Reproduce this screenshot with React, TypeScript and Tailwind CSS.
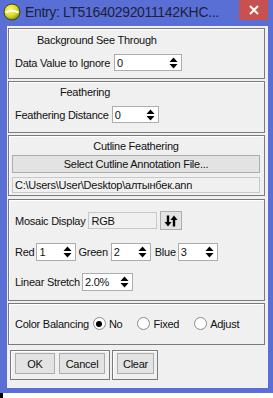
import { ReactNode } from "react";

function Spin() {
  return (
    <svg width="9" height="12" viewBox="0 0 9 12" className="shrink-0">
      <polygon points="4.5,0.5 8.5,5 0.5,5" fill="#000" />
      <polygon points="0.5,7 8.5,7 4.5,11.5" fill="#000" />
    </svg>
  );
}

function SpinBox({ value, w, h = 17 }: { value: string; w: number; h?: number }) {
  return (
    <div
      className="flex items-center justify-between bg-white border border-[#abadb3] pl-[2px] pr-[3px]"
      style={{ width: w, height: h }}
    >
      <span>{value}</span>
      <Spin />
    </div>
  );
}

function Group({ children, className }: { children: ReactNode; className?: string }) {
  return (
    <div className={`border border-[#7a7a7a] shadow-[inset_1px_1px_0_#ffffff] ${className}`}>
      {children}
    </div>
  );
}

function Btn({ children, className }: { children: ReactNode; className?: string }) {
  return (
    <div className={`flex items-center justify-center bg-[#e3e3e3] border border-[#adadad] ${className}`}>
      {children}
    </div>
  );
}

function Radio({ on, label, className }: { on?: boolean; label: string; className?: string }) {
  return (
    <div className={`flex items-center gap-[3px] ${className}`}>
      <div className="w-[13px] h-[13px] rounded-full border border-[#8a8a8a] bg-white flex items-center justify-center">
        {on && <div className="w-[6px] h-[6px] rounded-full bg-black" />}
      </div>
      <span>{label}</span>
    </div>
  );
}

export default function App() {
  return (
    <div
      className="w-[273px] h-[398px] bg-[#5a6fd6] flex flex-col overflow-hidden text-[11px] leading-[14px] tracking-[-0.25px] text-[#111]"
      style={{ fontFamily: '"Liberation Sans", Arial, sans-serif' }}
    >
      {/* title bar */}
      <div className="h-[26px] flex items-start shrink-0">
        <svg width="18" height="18" viewBox="0 0 18 18" className="mt-[3px] ml-[3px]">
          <defs>
            <radialGradient id="g" cx="0.4" cy="0.35" r="0.7">
              <stop offset="0" stopColor="#fff59a" />
              <stop offset="0.6" stopColor="#d8d820" />
              <stop offset="1" stopColor="#6a8a10" />
            </radialGradient>
          </defs>
          <circle cx="9" cy="9" r="8" fill="url(#g)" stroke="#3a4a10" strokeWidth="1" />
          <path d="M2.5 9.5 Q9 6 15.5 9.5" stroke="#fffbe0" strokeWidth="2" fill="none" />
        </svg>
        <span className="ml-[4px] mt-[3px] text-[14px] leading-[18px] tracking-[-0.35px] text-[#1b1f3b]">
          Entry: LT51640292011142KHC...
        </span>
        <div className="ml-auto mr-[5px] w-[29px] h-[20px] bg-[#c75050] flex items-center justify-center">
          <svg width="10" height="10" viewBox="0 0 10 10">
            <path d="M1 1 L9 9 M9 1 L1 9" stroke="#fff" strokeWidth="2" />
          </svg>
        </div>
      </div>

      {/* client */}
      <div className="ml-[7px] mr-[5px] h-[362px] shrink-0 bg-[#f0f0f0] flex flex-col pl-[1px] pr-[3px] pt-[2px]">
        <Group className="h-[51px] pt-[4px]">
          <div className="pl-[28px] h-[14px]">Background See Through</div>
          <div className="flex items-center mt-[7px] pl-[6px] gap-[4px]">
            <span>Data Value to Ignore</span>
            <SpinBox value="0" w={68} />
          </div>
        </Group>

        <Group className="h-[52px] mt-[2px] pt-[3px]">
          <div className="pl-[51px] h-[14px]">Feathering</div>
          <div className="flex items-center mt-[7px] pl-[6px] gap-[3px]">
            <span>Feathering Distance</span>
            <SpinBox value="0" w={47} h={17} />
          </div>
        </Group>

        <Group className="h-[61px] mt-[2px] pt-[3px] px-[3px] pr-[4px]">
          <div className="text-center h-[14px]">Cutline Feathering</div>
          <Btn className="mt-[2px] h-[18px]">Select Cutline Annotation File...</Btn>
          <div className="mt-[4px] h-[16px] bg-[#f0f0f0] border border-[#c8c8c8] flex items-center pl-[2px]">
            C:\Users\User\Desktop\алтынбек.ann
          </div>
        </Group>

        <Group className="h-[102px] mt-[3px] pt-[11px] pl-[6px]">
          <div className="flex items-center h-[19px] gap-[3px]">
            <span>Mosaic Display</span>
            <div className="w-[69px] h-[17px] border border-[#c8c8c8] bg-[#f0f0f0] flex items-center pl-[2px]">
              RGB
            </div>
            <Btn className="w-[22px] h-[19px]">
              <svg width="14" height="12" viewBox="0 0 14 12">
                <path d="M4 0.5 V8" stroke="#000" strokeWidth="2.4" />
                <polygon points="0.5,7 7.5,7 4,11.5" fill="#000" />
                <path d="M10 11.5 V4" stroke="#000" strokeWidth="2.4" />
                <polygon points="6.5,5 13.5,5 10,0.5" fill="#000" />
              </svg>
            </Btn>
          </div>
          <div className="flex items-center mt-[13px] h-[18px]">
            <span className="mr-[2px]">Red</span>
            <SpinBox value="1" w={40} h={18} />
            <span className="ml-[2px] mr-[3px]">Green</span>
            <SpinBox value="2" w={40} h={18} />
            <span className="ml-[4px] mr-[2px]">Blue</span>
            <SpinBox value="3" w={40} h={18} />
          </div>
          <div className="flex items-center mt-[12px] h-[18px] gap-[2px]">
            <span>Linear Stretch</span>
            <SpinBox value="2.0%" w={51} h={18} />
          </div>
        </Group>

        <Group className="h-[42px] mt-[2px] pt-[13px] pl-[6px]">
          <div className="flex items-center h-[13px]">
            <span className="mr-[4px]">Color Balancing</span>
            <Radio on label="No" />
            <Radio label="Fixed" className="ml-[15px]" />
            <Radio label="Adjust" className="ml-[15px]" />
          </div>
        </Group>

        <div className="flex mt-[5px] pl-[2px] gap-[2px]">
          <Group className="h-[30px] pt-[2px] px-[4px] flex gap-[4px]">
            <Btn className="w-[40px] h-[21px]">OK</Btn>
            <Btn className="w-[46px] h-[21px]">Cancel</Btn>
          </Group>
          <Group className="h-[30px] pt-[2px] pl-[4px] pr-[3px] flex">
            <Btn className="w-[37px] h-[21px]">Clear</Btn>
          </Group>
        </div>
      </div>

      <div className="h-[5px] shrink-0" />
      <div className="flex-1 bg-white flex">
        <div className="w-[3px] bg-black" />
      </div>
    </div>
  );
}
